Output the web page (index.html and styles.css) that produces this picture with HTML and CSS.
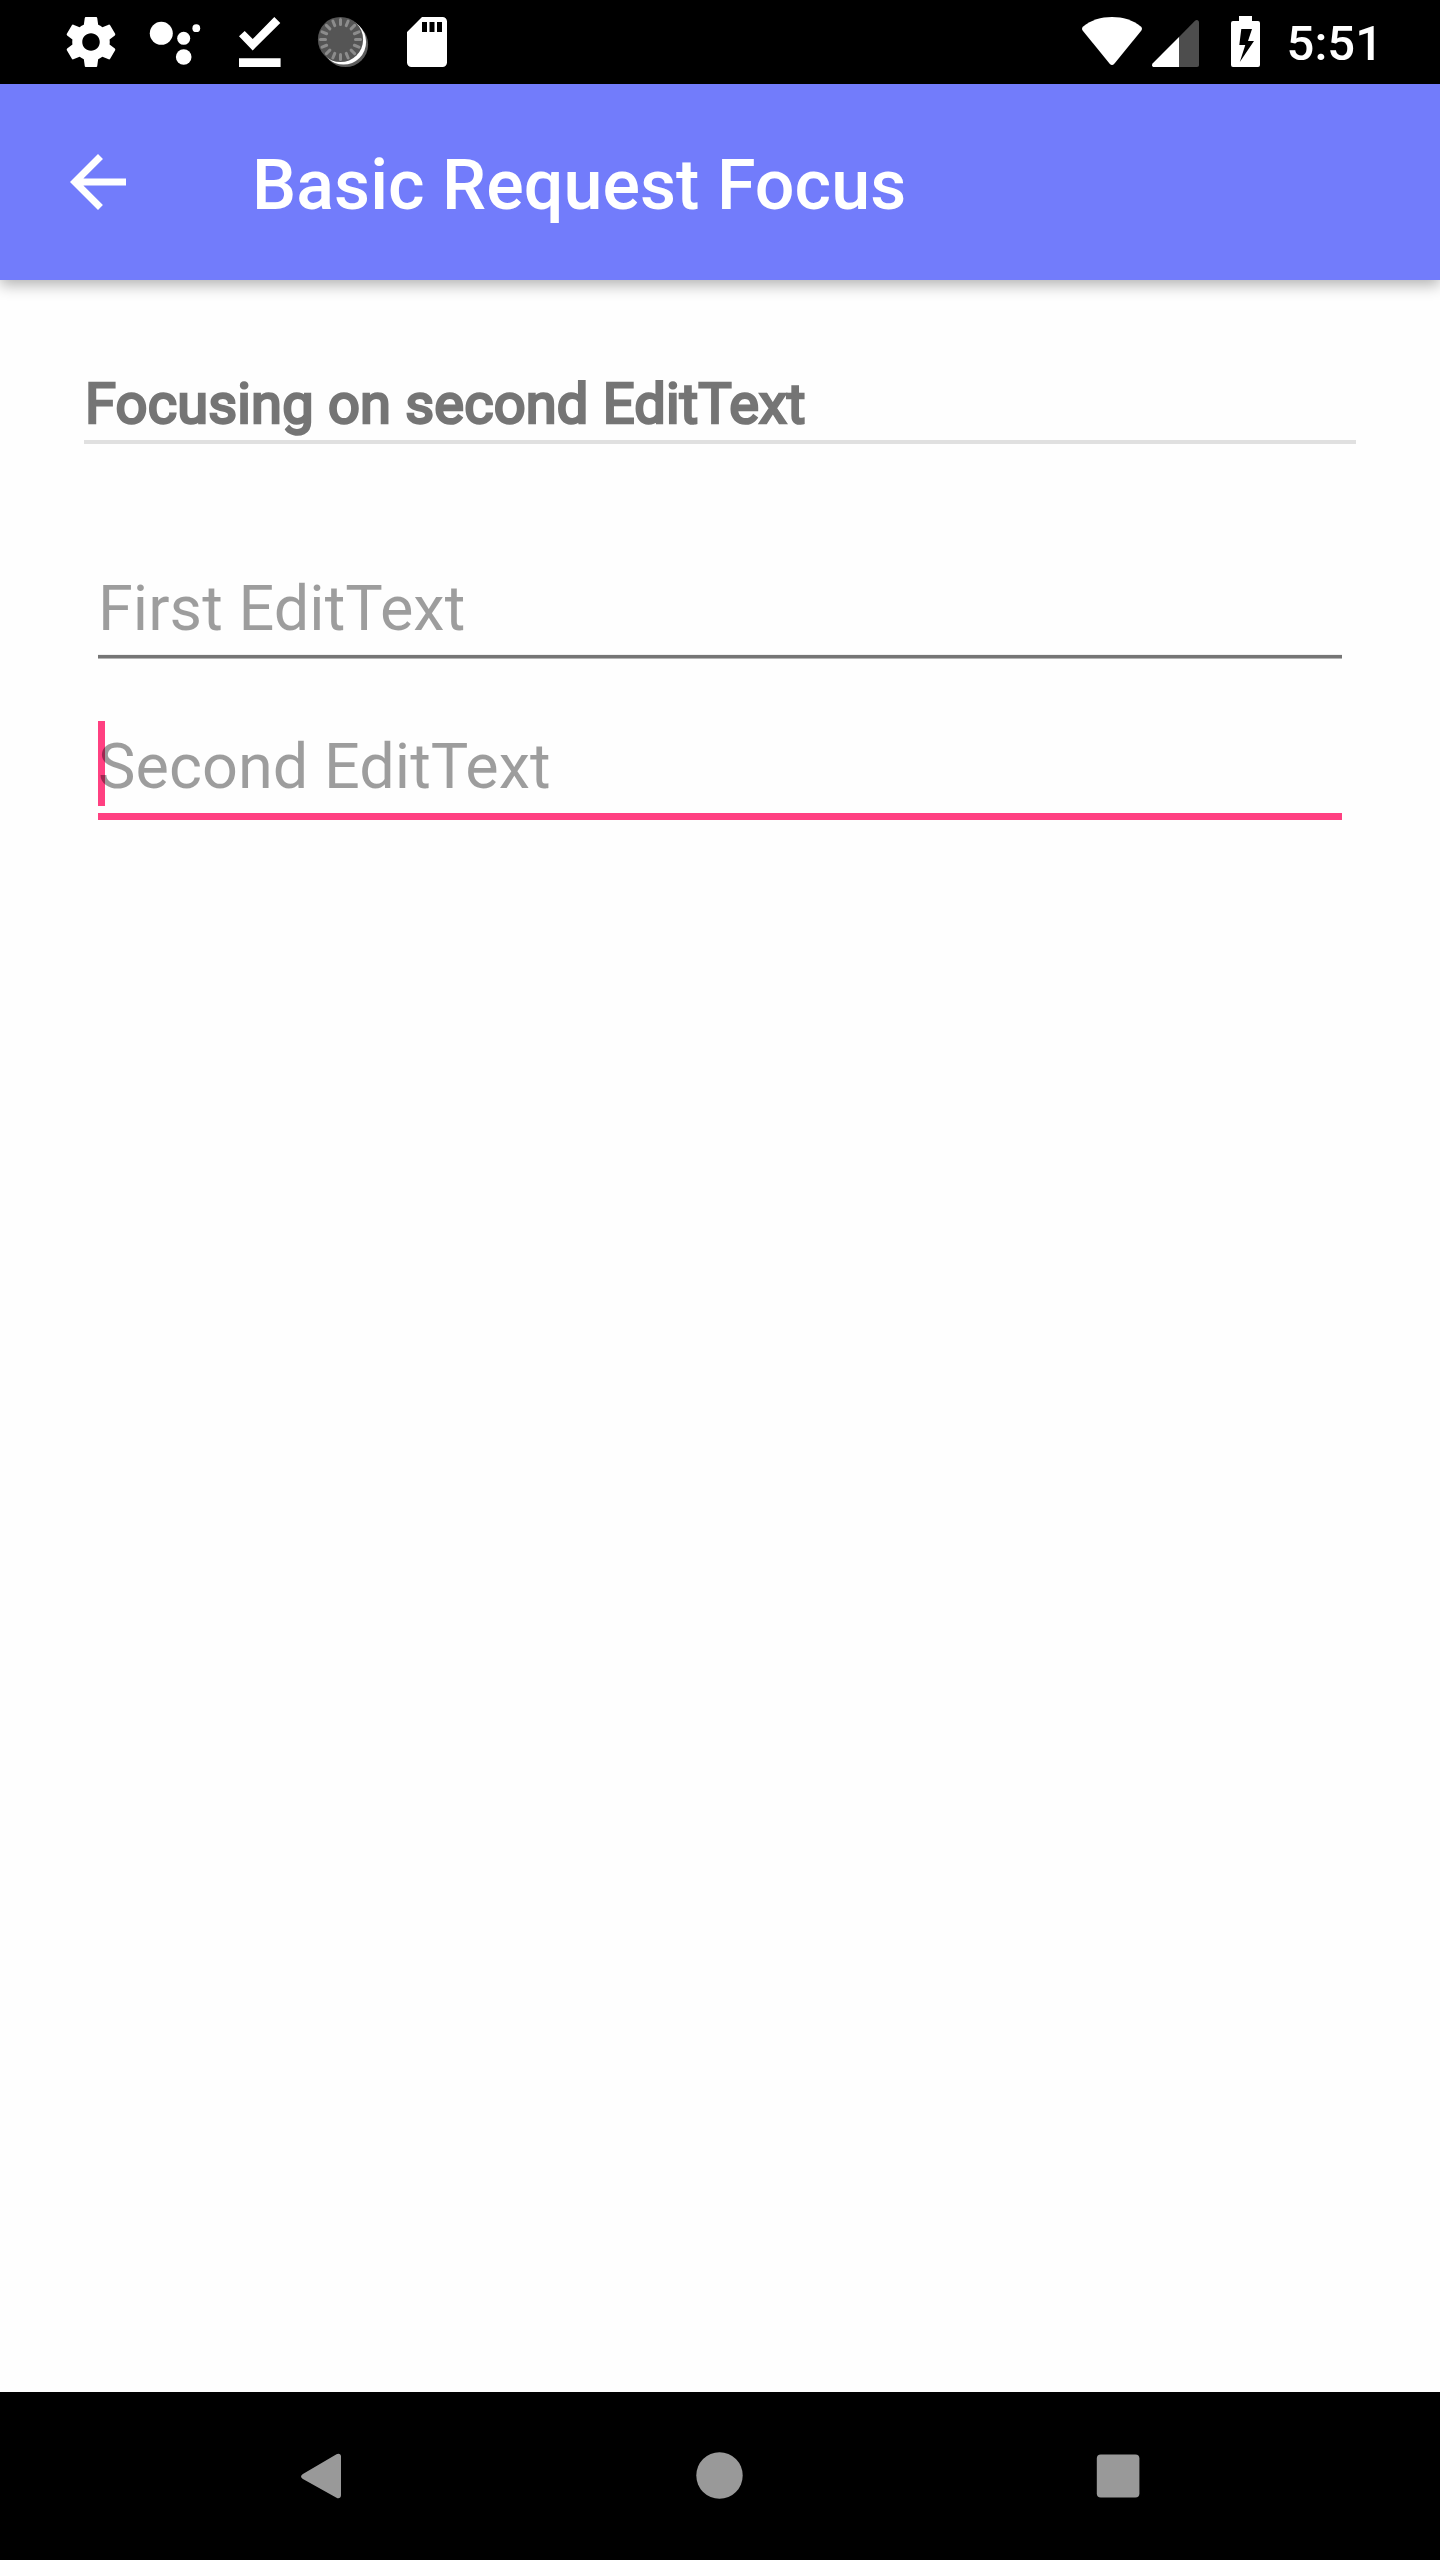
FILE: index.html
```html
<!DOCTYPE html>
<html lang="en">
<head>
<meta charset="utf-8">
<title>Basic Request Focus</title>
<link rel="stylesheet" href="styles.css">
</head>
<body>
<div class="screen">
  <div class="status-bar">
    <div class="notifications">
      <svg class="notification" viewBox="-4.8 -4.8 33.6 33.6" fill="#fff"><path d="M19.43 12.98c.04-.32.07-.64.07-.98s-.03-.66-.07-.98l2.11-1.65c.19-.15.24-.42.12-.64l-2-3.46c-.12-.22-.39-.3-.61-.22l-2.49 1c-.52-.4-1.08-.73-1.69-.98l-.38-2.65C14.46 2.18 14.25 2 14 2h-4c-.25 0-.46.18-.49.42l-.38 2.65c-.61.25-1.17.59-1.69.98l-2.49-1c-.23-.09-.49 0-.61.22l-2 3.46c-.13.22-.07.49.12.64l2.11 1.65c-.04.32-.07.65-.07.98s.03.66.07.98l-2.11 1.65c-.19.15-.24.42-.12.64l2 3.46c.12.22.39.3.61.22l2.49-1c.52.4 1.08.73 1.69.98l.38 2.65c.03.24.24.42.49.42h4c.25 0 .46-.18.49-.42l.38-2.65c.61-.25 1.17-.59 1.69-.98l2.49 1c.23.09.49 0 .61-.22l2-3.46c.12-.22.07-.49-.12-.64l-2.11-1.65zM12 15.5c-1.93 0-3.5-1.57-3.5-3.5s1.57-3.5 3.5-3.5 3.5 1.57 3.5 3.5-1.57 3.5-3.5 3.5z"/></svg>
      <svg class="notification" viewBox="0 0 84 84" fill="#fff"><circle cx="28.3" cy="33.3" r="11.5"/><circle cx="50.7" cy="38.3" r="6.5"/><circle cx="50.7" cy="57" r="7.8"/><circle cx="63.3" cy="28.2" r="3.9"/></svg>
      <svg class="notification" viewBox="0 0 84 84" fill="#fff"><path d="M22 36.2 27.7 31l8 8L57.3 17l6 5.9-27.6 27.5zM22 58.3h41.6V67H22z"/></svg>
      <svg class="notification" viewBox="0 0 84 84">
        <circle cx="44.5" cy="44.5" r="22.6" fill="#5c5c5c"/>
        <circle cx="42.5" cy="42" r="22.6" fill="#fff"/>
        <circle cx="39.5" cy="39.5" r="22.6" fill="#555"/>
        <g stroke="#8c8c8c" stroke-width="3" stroke-linecap="round">
          <path id="spokes" d="M24.5 39.5h-5M54.5 39.5h5M39.5 24.5v-5M39.5 54.5v5"/>
          <use href="#spokes" transform="rotate(22.5 39.5 39.5)"/>
          <use href="#spokes" transform="rotate(45 39.5 39.5)"/>
          <use href="#spokes" transform="rotate(67.5 39.5 39.5)"/>
        </g>
      </svg>
      <svg class="notification" viewBox="0 0 84 84" fill="#fff"><path fill-rule="evenodd" d="M37 17h20.500a4.500 4.500 0 0 1 4.500 4.500v41a4.500 4.500 0 0 1-4.500 4.500h-31a4.500 4.500 0 0 1-4.500-4.500V32zM37 22v10h5V22zM44.500 22v10h5V22zM52 22v10h5V22z"/></svg>
    </div>
    <div class="system">
      <svg class="wifi" viewBox="0 0 60 84" fill="#fff"><path d="M1.2 26.5C9 20 19 17 30 17s21 3 28.800 9.500c1.500 1.300 1.500 2.700.4 4.200L32.300 63.800c-1.400 1.600-3.200 1.600-4.600 0L.8 30.700c-1.100-1.500-1.100-2.900.4-4.200z"/></svg>
      <svg class="signal" viewBox="0 0 47 84"><path fill="#4d4d4d" d="M27 37 43 20.800c1.700-1.700 4-.8 4 1.600V65c0 1.300-.7 2-2 2H27z"/><path fill="#fff" d="M27 37v30H2.200C0 67-.7 65 .8 63.300z"/></svg>
      <svg class="battery" viewBox="0 0 29 84"><path fill="#fff" fill-rule="evenodd" d="M8 16h13v5h6a2 2 0 0 1 2 2v42a2 2 0 0 1-2 2H2a2 2 0 0 1-2-2V23a2 2 0 0 1 2-2h6zM10.300 29 8.300 45h6L8.800 62 23 41h-6l4-12z"/></svg>
      <span class="clock">5:51</span>
    </div>
  </div>
  <header class="app-bar">
    <svg class="back" viewBox="0 0 24 24" fill="#fff"><path d="M20 11H7.830l5.590-5.590L12 4l-8 8 8 8 1.410-1.410L7.830 13H20v-2z"/></svg>
    <h1 class="title">Basic Request Focus</h1>
  </header>
  <main class="content">
    <h2 class="section">Focusing on second EditText</h2>
    <div class="fields">
      <div class="field"><span class="hint">First EditText</span></div>
      <div class="field focused"><span class="hint">Second EditText</span></div>
    </div>
  </main>
  <nav class="nav-bar">
    <svg class="nav-icon" viewBox="0 0 56 56" fill="#999"><path d="M8.900 25.900 42.500 6.300C44.700 5 47 6 47 8.500v38.700c0 2.700-2.300 3.800-4.500 2.500L8.900 30.900c-2.500-1.500-2.500-3.600 0-5z"/></svg>
    <svg class="nav-icon" viewBox="0 0 56 56" fill="#999"><circle cx="27.500" cy="27.500" r="23.200"/></svg>
    <svg class="nav-icon" viewBox="0 0 56 56" fill="#999"><rect x="6.800" y="6.500" width="42.600" height="43" rx="4"/></svg>
  </nav>
</div>
</body>
</html>
```
FILE: styles.css
```css
* { box-sizing: border-box; }
body { margin: 0; font-family: Roboto, sans-serif; }
svg { display: block; flex: none; }
h1, h2 { margin: 0; }

.screen {
  display: flex;
  flex-direction: column;
  width: 1440px;
  height: 2560px;
  background: #fefefe;
}

.status-bar {
  display: flex;
  justify-content: space-between;
  height: 84px;
  padding: 0 57px 0 49px;
  background: #000;
  color: #fff;
}
.notifications, .system { display: flex; }
.notification { width: 84px; height: 84px; }
.wifi { width: 60px; height: 84px; }
.signal { width: 47px; height: 84px; margin-left: 10px; }
.battery { width: 29px; height: 84px; margin-left: 32px; }
.clock {
  margin-left: 27px;
  padding-top: 15px;
  font-size: 49px;
  font-weight: 500;
  line-height: 58px;
}

.app-bar {
  position: relative;
  display: flex;
  align-items: center;
  gap: 112px;
  height: 196px;
  padding-left: 56px;
  background: #727cfb;
  box-shadow: 0 5px 14px rgba(0, 0, 0, .3);
  color: #fff;
}
.back { width: 84px; height: 84px; }
.title {
  padding-top: 6px;
  font-size: 70px;
  font-weight: 500;
  letter-spacing: .06px;
  line-height: 82px;
}

.content { flex: 1; padding: 91px 84px 0; }
.section {
  padding-bottom: 3px;
  border-bottom: 4px solid #e0e0e0;
  color: #757575;
  font-size: 56px;
  font-weight: 400;
  letter-spacing: .18px;
  line-height: 66px;
  text-indent: 1px;
  -webkit-text-stroke: 2.6px #757575;
}

.fields {
  display: flex;
  flex-direction: column;
  gap: 62px;
  padding: 119px 14px 0;
}
.field {
  display: flex;
  height: 96px;
  padding-top: 9px;
  color: rgba(0, 0, 0, .38);
  font-size: 63px;
  letter-spacing: .04px;
  line-height: 74px;
  background: linear-gradient(#f0f0f0 1px, #757575 1px 4px, #b5b5b5 4px) bottom / 100% 5px no-repeat;
}
.focused {
  height: 99px;
  background:
    linear-gradient(#ff4081, #ff4081) 0 0 / 7px 85px no-repeat,
    linear-gradient(#ff4081, #ff4081) bottom / 100% 7px no-repeat;
}

.nav-bar {
  display: flex;
  justify-content: center;
  align-items: center;
  gap: 342px;
  height: 168px;
  background: #000;
}
.nav-icon { width: 56px; height: 56px; }
```
